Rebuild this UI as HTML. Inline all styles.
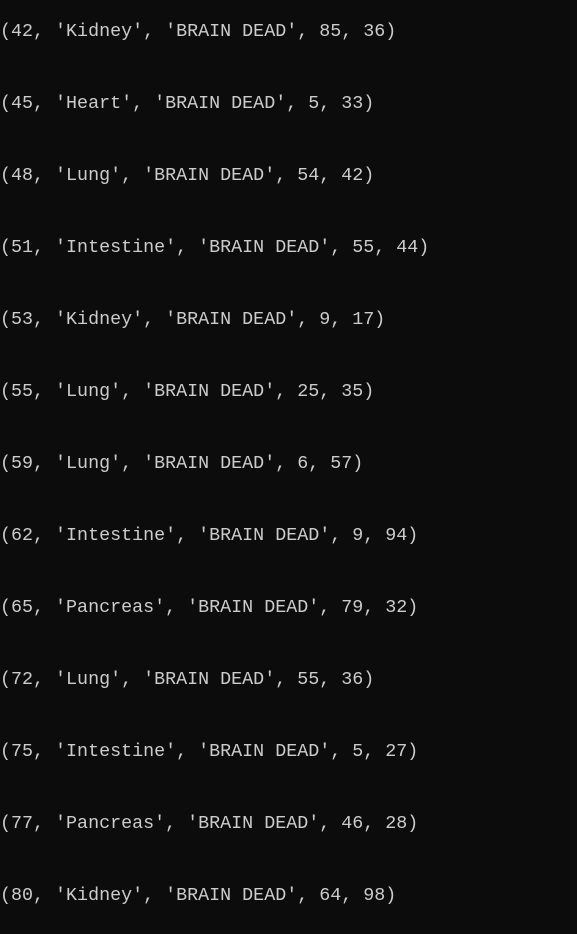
<!DOCTYPE html><html><head><style>
body{margin:0;background:#0c0c0c;width:577px;height:934px;overflow:hidden}
div{position:absolute;left:0;font-family:"Liberation Mono",monospace;font-size:18.35px;color:#cccccc;white-space:pre;line-height:20px}
</style></head><body>
<div style="top:22px">(42, 'Kidney', 'BRAIN DEAD', 85, 36)</div>
<div style="top:94px">(45, 'Heart', 'BRAIN DEAD', 5, 33)</div>
<div style="top:166px">(48, 'Lung', 'BRAIN DEAD', 54, 42)</div>
<div style="top:238px">(51, 'Intestine', 'BRAIN DEAD', 55, 44)</div>
<div style="top:310px">(53, 'Kidney', 'BRAIN DEAD', 9, 17)</div>
<div style="top:382px">(55, 'Lung', 'BRAIN DEAD', 25, 35)</div>
<div style="top:454px">(59, 'Lung', 'BRAIN DEAD', 6, 57)</div>
<div style="top:526px">(62, 'Intestine', 'BRAIN DEAD', 9, 94)</div>
<div style="top:598px">(65, 'Pancreas', 'BRAIN DEAD', 79, 32)</div>
<div style="top:670px">(72, 'Lung', 'BRAIN DEAD', 55, 36)</div>
<div style="top:742px">(75, 'Intestine', 'BRAIN DEAD', 5, 27)</div>
<div style="top:814px">(77, 'Pancreas', 'BRAIN DEAD', 46, 28)</div>
<div style="top:886px">(80, 'Kidney', 'BRAIN DEAD', 64, 98)</div>
</body></html>
